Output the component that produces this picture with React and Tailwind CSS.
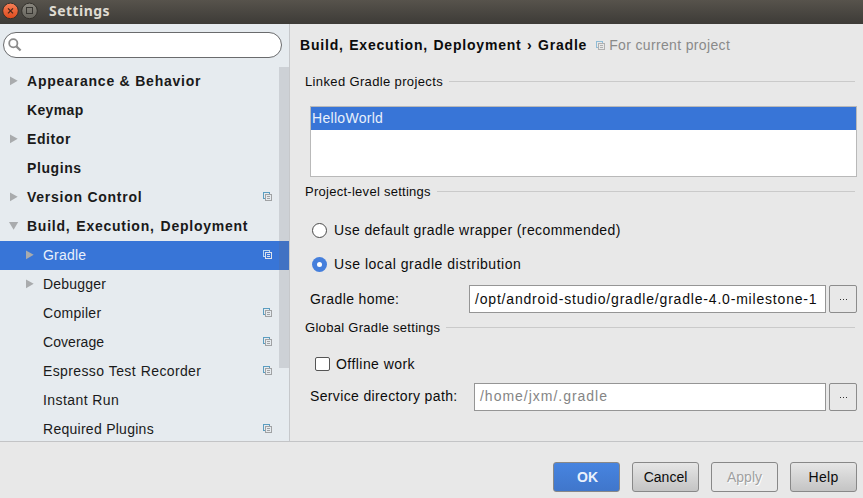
const tree = [
  { label: 'Appearance & Behavior', arrow: 'right', track: 'tracking-[0.78px]' },
  { label: 'Keymap', track: 'tracking-[0.35px]' },
  { label: 'Editor', arrow: 'right', track: 'tracking-[0.6px]' },
  { label: 'Plugins', track: 'tracking-[0.6px]' },
  { label: 'Version Control', arrow: 'right', project: true, track: 'tracking-[0.74px]' },
  { label: 'Build, Execution, Deployment', arrow: 'down', track: 'tracking-[0.75px] [word-spacing:1.3px]' },
  { label: 'Gradle', child: true, arrow: 'right', project: true, selected: true, track: 'tracking-[0.2px]' },
  { label: 'Debugger', child: true, arrow: 'right', track: 'tracking-[0.2px]' },
  { label: 'Compiler', child: true, project: true, track: 'tracking-[0.3px]' },
  { label: 'Coverage', child: true, project: true, track: 'tracking-[0.05px]' },
  { label: 'Espresso Test Recorder', child: true, project: true, track: 'tracking-[0.37px] [word-spacing:0.5px]' },
  { label: 'Instant Run', child: true, track: 'tracking-[0.42px]' },
  { label: 'Required Plugins', child: true, project: true, track: 'tracking-[0.27px]' },
];

function ProjectIcon({ back = '#5b9dc0', front = '#a0a2a4', fill = '#e6ebef' }) {
  return (
    <svg width="9" height="9" viewBox="0 0 9 9" className="shrink-0">
      <path d="M0 0h7v2H6V1H1v5h1v1H0z" fill={back} />
      <path d="M2 2h7v7H2z" fill={front} />
      <path d="M3 3h5v5H3z" fill={fill} />
      <path d="M4 4h3v1H4zM4 6h3v1H4z" fill={front} />
    </svg>
  );
}

function Arrow({ dir }) {
  return (
    <svg width="10" height="10" viewBox="0 0 10 10" className="shrink-0">
      {dir === 'right' && <path d="M1 .5 8.7 4.8 1 9.2z" fill="#a9abad" />}
      {dir === 'down' && <path d="M0 1h9.2L4.6 8.8z" fill="#a9abad" />}
    </svg>
  );
}

function TreeRow({ item }) {
  const tone = item.selected ? 'bg-[#3875d7] text-[#e9f0fb]' : 'text-[#1a1a1a]';
  return (
    <div className={`flex h-[29px] shrink-0 items-center pb-[2px] pr-[17px] ${item.child ? 'pl-[25px]' : 'pl-[9px]'} ${tone}`}>
      <Arrow dir={item.arrow} />
      <span className={`ml-2 flex-1 whitespace-nowrap ${item.child ? '' : 'font-bold'} ${item.track}`}>{item.label}</span>
      {item.project &&
        (item.selected ? <ProjectIcon back="#b9d9f2" front="#dde3ec" fill="#3875d7" /> : <ProjectIcon />)}
    </div>
  );
}

function Section({ title, track }) {
  return (
    <div className="flex h-5 items-center gap-[6px] pl-[15px] pr-2 text-[13px]">
      <span className={`whitespace-nowrap pt-px ${track}`}>{title}</span>
      <div className="h-px flex-1 bg-[#cacaca]" />
    </div>
  );
}

function Browse() {
  return (
    <button className="ml-[3px] flex h-7 w-7 items-center justify-center gap-[2px] rounded-[2px] border border-[#8c8c8c]">
      <i className="size-px bg-[#333]" />
      <i className="size-px bg-[#333]" />
      <i className="size-px bg-[#333]" />
    </button>
  );
}

const buttonBase = 'h-[30px] w-[67px] rounded-[3px] border border-[#888] pb-px';

export default function App() {
  return (
    <div className="flex h-[498px] w-[863px] flex-col overflow-hidden bg-[#e8e8e8] font-['Liberation_Sans',Arial,sans-serif] text-[14px] leading-5 text-[#0c0c0c]">
      <header className="flex h-6 shrink-0 items-center bg-linear-to-b from-[#57534c] to-[#3d3b37] pb-[3px] pl-[2px]">
        <svg width="36" height="18" viewBox="0 0 36 18" className="shrink-0">
          <defs>
            <linearGradient id="close" x2="0" y2="1">
              <stop stopColor="#f58058" />
              <stop offset="1" stopColor="#df4a1c" />
            </linearGradient>
            <linearGradient id="max" x2="0" y2="1">
              <stop stopColor="#8b8880" />
              <stop offset="1" stopColor="#66645d" />
            </linearGradient>
          </defs>
          <circle cx="8.5" cy="8.9" r="7.8" fill="url(#close)" stroke="#33302b" />
          <path d="m6 6.4 5 5m0-5-5 5" stroke="#46261a" strokeWidth="1.3" />
          <circle cx="27.5" cy="8.9" r="7.8" fill="url(#max)" stroke="#33302b" />
          <rect x="24.5" y="5.5" width="6" height="6" fill="none" stroke="#383632" />
        </svg>
        <h1 className="ml-[11px] font-['Noto_Sans',sans-serif] text-[14px] font-bold tracking-[0.45px] text-[#dfdbd2]">Settings</h1>
      </header>

      <div className="flex h-[418px] shrink-0 border-b border-[#c3c4c6]">
        <aside className="flex w-[290px] shrink-0 flex-col border-r border-[#c6c8cb] bg-[#e6ebef]">
          <div className="mx-[3px] mt-2 flex h-[26px] w-[279px] shrink-0 items-center rounded-full border border-[#6a6b6d] bg-white pl-1">
            <svg width="14" height="14" viewBox="0 0 14 14" fill="none" stroke="#8c8c8c">
              <circle cx="5.3" cy="5.3" r="4.1" strokeWidth="1.8" />
              <path d="m8.4 8.4 4.2 4.1" strokeWidth="2.2" />
            </svg>
          </div>
          <div className="relative mt-[9px] flex min-h-0 flex-1 flex-col overflow-hidden">
            {tree.map((item) => (
              <TreeRow key={item.label} item={item} />
            ))}
            <div className="absolute right-0 top-0 h-[301px] w-[10px] bg-[#696974]/20" />
          </div>
        </aside>

        <main className="flex min-w-0 flex-1 flex-col">
          <div className="flex h-[42px] items-center pl-[10px]">
            <h2 className="whitespace-nowrap font-bold tracking-[0.8px] [word-spacing:0.8px]">Build, Execution, Deployment › Gradle</h2>
            <div className="ml-[9px] flex items-center gap-1 text-[#8a8a8a]">
              <ProjectIcon back="#8fbcd6" front="#b0b0b0" fill="#e8e8e8" />
              <span className="whitespace-nowrap tracking-[0.35px]">For current project</span>
            </div>
          </div>
          <div className="mt-[5px]">
            <Section title="Linked Gradle projects" track="tracking-[0.36px]" />
          </div>
          <div className="ml-5 mr-[6px] mt-[15px] h-[71px] border border-[#b9b9b9] bg-white">
            <div className="flex h-[23px] items-center bg-[#3875d7] pb-[2px] pl-px text-[#e9f0fb] tracking-[0.3px]">HelloWorld</div>
          </div>
          <div className="mt-1">
            <Section title="Project-level settings" track="tracking-[0.27px]" />
          </div>
          <label className="mt-[19px] flex h-5 items-center pl-[22px]">
            <span className="size-[15px] rounded-full border border-[#4a4a4a] bg-white" />
            <span className="ml-[7px] whitespace-nowrap tracking-[0.4px]">Use default gradle wrapper (recommended)</span>
          </label>
          <label className="mt-[14px] flex h-5 items-center pl-[22px]">
            <span className="flex size-[15px] items-center justify-center rounded-full bg-[#457fdc]">
              <span className="size-[5px] rounded-full bg-white" />
            </span>
            <span className="ml-[7px] whitespace-nowrap tracking-[0.53px]">Use local gradle distribution</span>
          </label>
          <div className="mt-[11px] flex h-7 items-center pl-5">
            <span className="w-[159px] pb-px tracking-[0.38px]">Gradle home:</span>
            <div className="flex h-7 w-[357px] items-center whitespace-nowrap border border-[#959595] bg-white pb-px pl-[5px] tracking-[0.81px]">
              /opt/android-studio/gradle/gradle-4.0-milestone-1
            </div>
            <Browse />
          </div>
          <div className="mt-1">
            <Section title="Global Gradle settings" track="tracking-[0.3px]" />
          </div>
          <label className="mt-[17px] flex h-5 items-center pl-[25px]">
            <span className="h-[14px] w-[15px] rounded-[2px] border border-[#555] bg-white" />
            <span className="ml-[6px] tracking-[0.45px]">Offline work</span>
          </label>
          <div className="mt-[9px] flex h-7 items-center pl-5">
            <span className="w-[164px] pb-[2px] tracking-[0.36px]">Service directory path:</span>
            <div className="flex h-7 w-[352px] items-center border border-[#959595] bg-white pb-[2px] pl-[5px] tracking-[0.98px] text-[#858585]">
              /home/jxm/.gradle
            </div>
            <Browse />
          </div>
        </main>
      </div>

      <footer className="flex flex-1 items-start justify-end gap-3 pr-[6px] pt-5">
        <button className={`${buttonBase} bg-linear-to-b from-[#4784e0] to-[#4076cb] pl-[2px] font-bold text-[#eaf1fc]`}>OK</button>
        <button className={`${buttonBase} bg-linear-to-b from-[#e6e6e6] to-[#c4c4c4]`}>Cancel</button>
        <button className={`${buttonBase} text-[#a0a0a0] [text-shadow:1px_1px_0_white]`}>Apply</button>
        <button className={`${buttonBase} bg-linear-to-b from-[#e6e6e6] to-[#c4c4c4] tracking-[0.3px]`}>Help</button>
      </footer>
    </div>
  );
}
